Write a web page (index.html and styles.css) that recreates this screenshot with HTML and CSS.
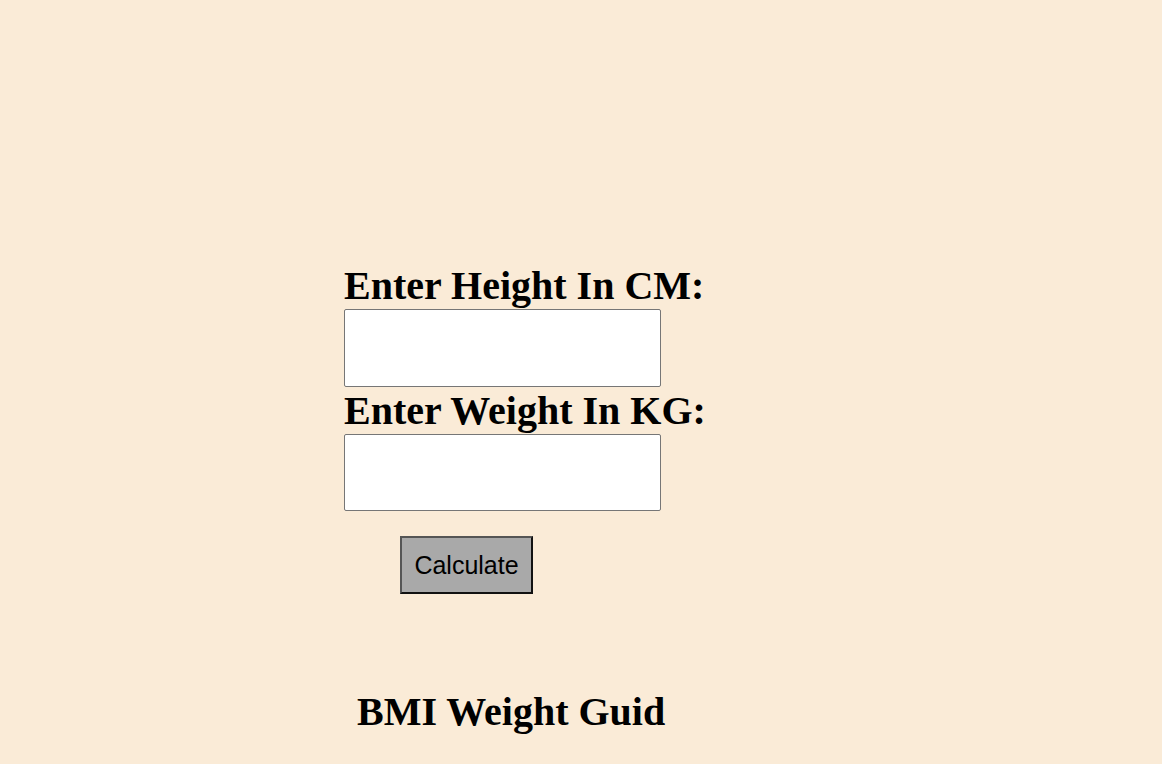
FILE: index.html
```html
<!DOCTYPE html>
<html>
<head>
<meta charset="utf-8">
<title>BMI Calculator</title>
<link rel="stylesheet" href="styles.css">
</head>
<body>
<main class="page">
  <form class="bmi-form">
    <label class="field-label" for="height">Enter Height In CM:</label>
    <input class="field-input" id="height" type="text">
    <label class="field-label" for="weight">Enter Weight In KG:</label>
    <input class="field-input field-input-short" id="weight" type="text">
    <button class="calc-btn" type="button">Calculate</button>
  </form>
  <h2 class="guide-title">BMI Weight Guid</h2>
</main>
</body>
</html>
```
FILE: styles.css
```css
html, body {
  margin: 0;
  padding: 0;
  background: #faebd7;
  font-family: "Liberation Serif", "Times New Roman", serif;
  color: #000;
}
.page {
  display: flex;
  flex-direction: column;
  padding: 262px 0 0 344px;
  height: 764px;
  box-sizing: border-box;
  overflow: hidden;
}
.bmi-form {
  display: flex;
  flex-direction: column;
  align-items: flex-start;
}
.field-label {
  font-weight: bold;
  font-size: 40px;
  line-height: 47px;
}
.field-input {
  width: 317px;
  height: 78px;
  box-sizing: border-box;
  border: 1px solid #767676;
  border-radius: 2px;
  background: #fff;
  margin: 0;
  padding: 0;
}
.field-input-short {
  height: 77px;
}
.calc-btn {
  margin: 25px 0 0 56px;
  width: 133px;
  height: 58px;
  box-sizing: border-box;
  background: #a9a9a9;
  border: 2px solid #111;
  border-top-color: #555;
  border-left-color: #555;
  border-radius: 0;
  font-family: "Liberation Sans", Arial, sans-serif;
  font-size: 25px;
  color: #000;
  padding: 0;
}
.guide-title {
  margin: 94px 0 0 13px;
  font-size: 40px;
  font-weight: bold;
  line-height: 47px;
}
```
